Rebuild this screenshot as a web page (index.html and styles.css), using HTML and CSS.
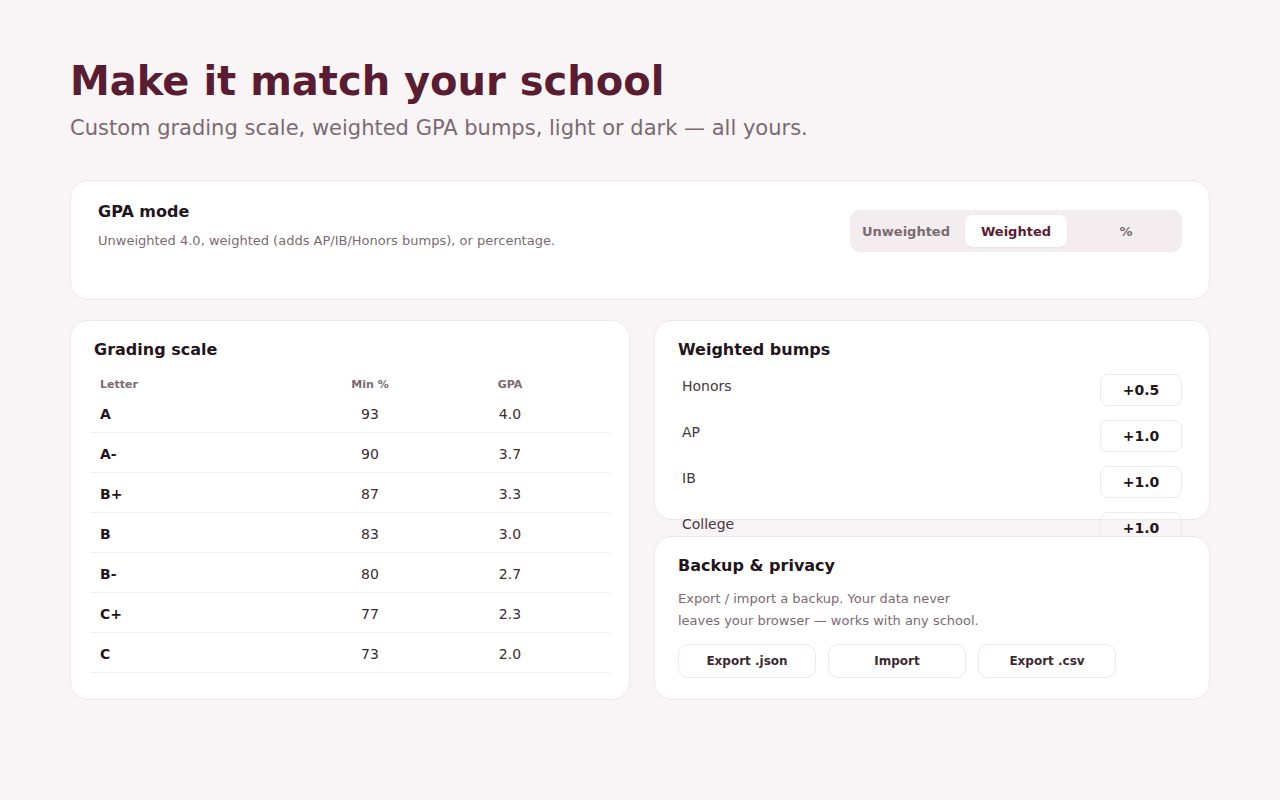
FILE: index.html
```html
<!DOCTYPE html>
<html lang="en">
<head>
    <meta charset="UTF-8">
    <meta name="viewport" content="width=device-width, initial-scale=1.0">
    <title>Settings</title>
    <link rel="stylesheet" href="styles.css">
</head>
<body>
    <div class="page">
        <h1>Make it match your school</h1>
        <p class="lead">Custom grading scale, weighted GPA bumps, light or dark — all yours.</p>

        <div class="card mode-card">
            <div class="mode-text">
                <h2>GPA mode</h2>
                <p class="muted">Unweighted 4.0, weighted (adds AP/IB/Honors bumps), or percentage.</p>
            </div>
            <div class="segmented">
                <button>Unweighted</button>
                <button class="active">Weighted</button>
                <button>%</button>
            </div>
        </div>

        <div class="grid">
            <div class="card scale-card">
                <h2 class="inset">Grading scale</h2>
                <table class="scale">
                    <thead>
                        <tr>
                            <th class="col-letter">Letter</th>
                            <th class="col-num">Min %</th>
                            <th class="col-num">GPA</th>
                            <th class="col-end"></th>
                        </tr>
                    </thead>
                    <tbody>
                        <tr><td class="letter">A</td><td>93</td><td>4.0</td><td></td></tr>
                        <tr><td class="letter">A-</td><td>90</td><td>3.7</td><td></td></tr>
                        <tr><td class="letter">B+</td><td>87</td><td>3.3</td><td></td></tr>
                        <tr><td class="letter">B</td><td>83</td><td>3.0</td><td></td></tr>
                        <tr><td class="letter">B-</td><td>80</td><td>2.7</td><td></td></tr>
                        <tr><td class="letter">C+</td><td>77</td><td>2.3</td><td></td></tr>
                        <tr><td class="letter">C</td><td>73</td><td>2.0</td><td></td></tr>
                    </tbody>
                </table>
            </div>

            <div class="side">
                <div class="card bumps-card">
                    <h2>Weighted bumps</h2>
                    <div class="bumps">
                        <div class="bump"><span>Honors</span><span class="bump-value">+0.5</span></div>
                        <div class="bump"><span>AP</span><span class="bump-value">+1.0</span></div>
                        <div class="bump"><span>IB</span><span class="bump-value">+1.0</span></div>
                        <div class="bump"><span>College</span><span class="bump-value">+1.0</span></div>
                    </div>
                </div>

                <div class="card backup-card">
                    <h2>Backup &amp; privacy</h2>
                    <p class="muted backup-text">Export / import a backup. Your data never leaves your browser — works with any school.</p>
                    <div class="actions">
                        <button>Export .json</button>
                        <button>Import</button>
                        <button>Export .csv</button>
                    </div>
                </div>
            </div>
        </div>
    </div>
</body>
</html>
```

FILE: styles.css
```css
body {
    font-family: "DejaVu Sans", sans-serif;
    background-color: #f9f4f5;
    color: #24141b;
    margin: 0;
    padding: 0;
}
.page {
    width: 1140px;
    margin: 0 auto;
    padding: 57px 0 60px;
}
h1 {
    font-size: 40px;
    line-height: 48px;
    color: #5a1c31;
    margin: 0;
}
.lead {
    font-size: 21px;
    line-height: 28px;
    color: #7b6a72;
    margin: 9px 0 0;
}
h2 {
    font-size: 16px;
    line-height: 22px;
    margin: 0;
    color: #24141b;
}
.muted {
    font-size: 13px;
    color: #7b6a72;
    margin: 0;
}
.card {
    position: relative;
    background-color: #ffffff;
    border: 1px solid #f2e7ea;
    border-radius: 18px;
    box-sizing: border-box;
}

/* gpa mode */
.mode-card {
    margin-top: 38px;
    min-height: 120px;
    padding: 20px 27px 19px;
    display: flex;
    justify-content: space-between;
    align-items: flex-start;
}
.mode-text .muted {
    margin-top: 8px;
    line-height: 20px;
}
.segmented {
    margin-top: 9px;
    display: grid;
    grid-template-columns: repeat(3, 102px);
    gap: 8px;
    padding: 5px;
    background-color: #f4edef;
    border-radius: 10px;
}
.segmented button {
    height: 32px;
    border: none;
    border-radius: 8px;
    background: transparent;
    font-family: inherit;
    font-size: 13px;
    font-weight: bold;
    color: #7b6a72;
    cursor: pointer;
}
.segmented button.active {
    background-color: #ffffff;
    color: #5a1c31;
    box-shadow: 0 1px 2px rgba(90, 28, 49, 0.06);
}

/* lower grid */
.grid {
    margin-top: 20px;
    display: grid;
    grid-template-columns: 560px 1fr;
    gap: 24px;
}
.scale-card {
    padding: 18px 19px 26px;
}
.inset {
    padding: 0 4px;
}
.scale {
    width: 100%;
    margin-top: 12px;
    border-collapse: collapse;
    table-layout: fixed;
}
.scale th {
    font-size: 11px;
    line-height: 14px;
    font-weight: bold;
    color: #7b6a72;
    padding: 5px 10px 1px;
    text-align: center;
}
/* widths are content widths, the 10px side padding comes on top */
.scale th.col-letter {
    text-align: left;
    width: 190px;
}
.scale th.col-num {
    width: 120px;
}
.scale th.col-end {
    width: 10px;
}
.scale td {
    font-size: 14px;
    line-height: 18px;
    color: #3d2a33;
    padding: 12px 10px 9px;
    text-align: center;
    border-bottom: 1px solid #f6eef0;
}
.scale td.letter {
    text-align: left;
    font-weight: bold;
    color: #24141b;
}

.side {
    display: flex;
    flex-direction: column;
    gap: 16px;
}
.bumps-card {
    flex: 1 1 0;
    min-height: 0;
    padding: 18px 23px;
}
.bumps {
    margin-top: 13px;
    display: flex;
    flex-direction: column;
    gap: 14px;
}
.bump {
    display: flex;
    justify-content: space-between;
    align-items: flex-start;
    padding: 0 4px;
    font-size: 14px;
    line-height: 24px;
    color: #4a3640;
}
.bump-value {
    width: 82px;
    height: 32px;
    box-sizing: border-box;
    border: 1px solid #f2e7ea;
    border-radius: 8px;
    text-align: center;
    line-height: 30px;
    font-weight: bold;
    color: #24141b;
}

.backup-card {
    flex: none;
    padding: 18px 23px 21px;
}
.backup-text {
    max-width: 310px;
    margin-top: 11px;
    line-height: 22px;
}
.actions {
    margin-top: 12px;
    display: flex;
    gap: 12px;
}
.actions button {
    width: 138px;
    height: 34px;
    background-color: #ffffff;
    border: 1px solid #f2e7ea;
    border-radius: 10px;
    font-family: inherit;
    font-size: 12px;
    font-weight: bold;
    color: #3d2a33;
    cursor: pointer;
}
```
